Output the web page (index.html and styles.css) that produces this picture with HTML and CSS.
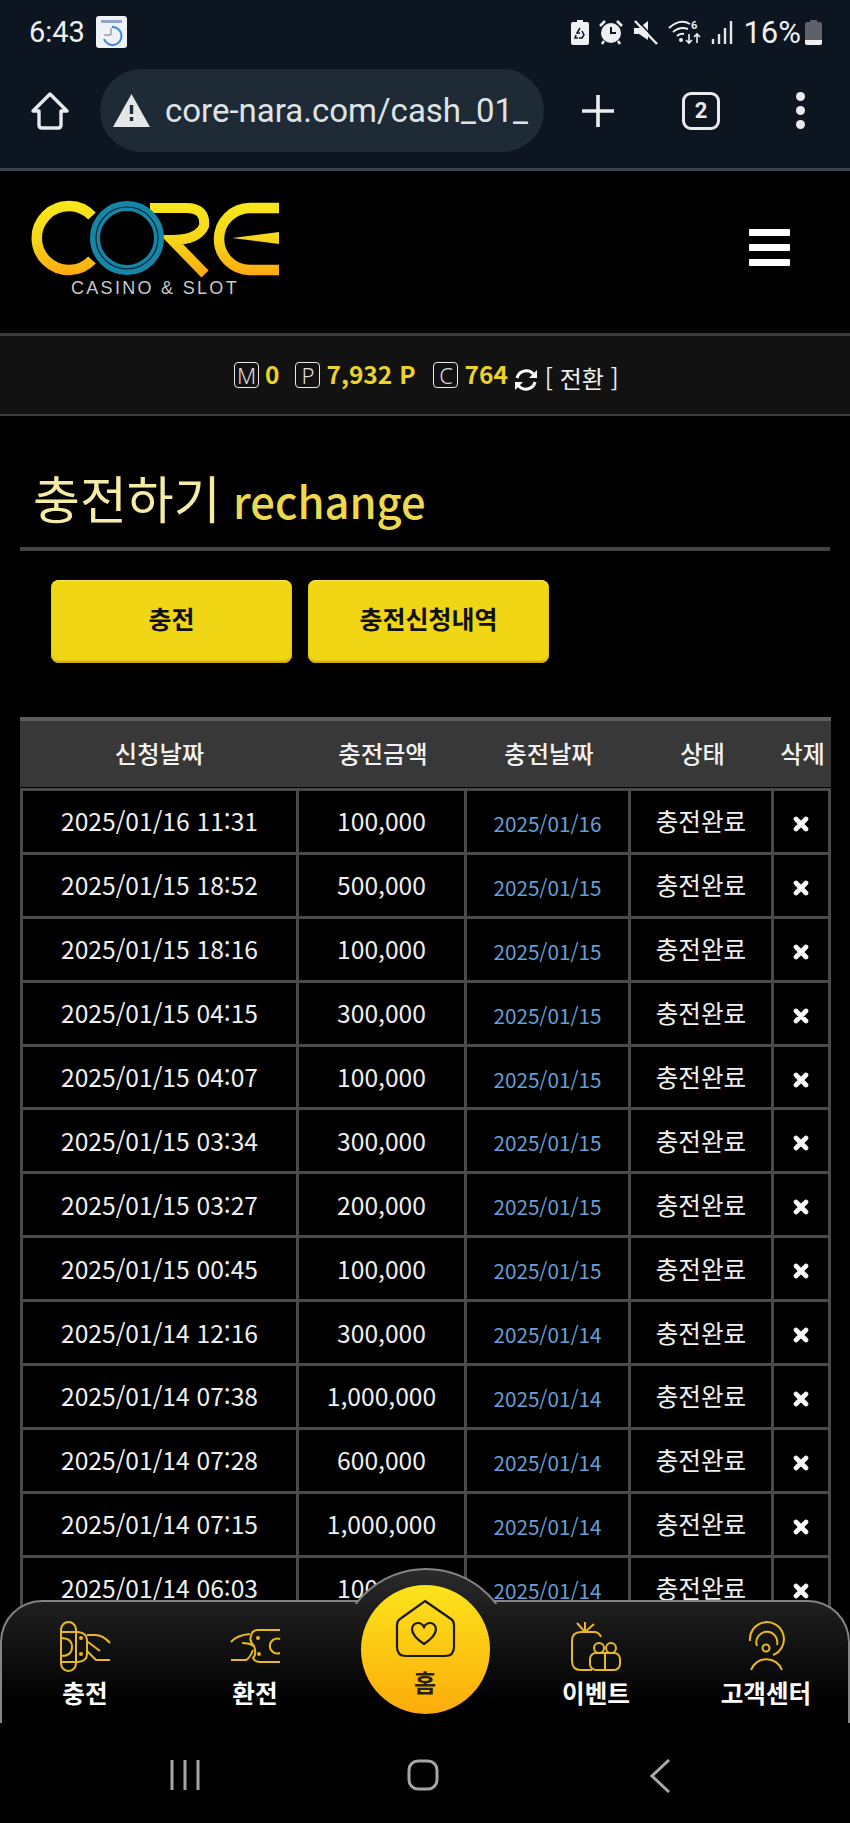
FILE: index.html
```html
<!DOCTYPE html>
<html lang="ko">
<head>
    <meta charset="UTF-8">
    <meta name="viewport" content="width=device-width, initial-scale=1.0">
    <title>충전하기</title>
    <link rel="stylesheet" href="styles.css">
</head>
<body>
    <div class="phone-top">
        <div class="status-bar">
            <span class="clock">6:43</span>
            <svg class="app-badge" width="31" height="32" viewBox="0 0 31 32">
                <rect width="31" height="32" rx="3" fill="#eef2f6"/>
                <rect x="5" y="4" width="21" height="3" fill="#8fa6c8"/>
                <path d="M16 11A9 9 0 1 1 8 23" fill="none" stroke="#3f86d8" stroke-width="2"/>
                <path d="M15 12V19H8" fill="none" stroke="#777" stroke-width="1"/>
            </svg>
            <div class="status-right">
                <svg width="18" height="25" viewBox="0 0 18 25">
                    <path d="M6 0H12V2H16Q18 2 18 4V23Q18 25 16 25H2Q0 25 0 23V4Q0 2 2 2H6Z" fill="#eef0f2"/>
                    <path d="M9 8L6 13H9M11 11L13 15L11 18H8M5 15L4 18H7" fill="none" stroke="#0c1620" stroke-width="1.5"/>
                </svg>
                <svg width="24" height="25" viewBox="0 0 24 25">
                    <circle cx="12" cy="13" r="10" fill="#eef0f2"/>
                    <path d="M12 7V13H17" fill="none" stroke="#0c1620" stroke-width="2"/>
                    <path d="M1 6L6 1M23 6L18 1M5 21L3 24M19 21L21 24" stroke="#eef0f2" stroke-width="2.5"/>
                </svg>
                <svg width="25" height="25" viewBox="0 0 25 25">
                    <path d="M1 8H6L15 1V20L6 14H1Z" fill="#eef0f2"/>
                    <path d="M2 1L24 24" stroke="#eef0f2" stroke-width="2.5"/>
                    <path d="M5 1L24 21" stroke="#0c1620" stroke-width="1.5"/>
                </svg>
                <svg width="33" height="26" viewBox="0 0 33 26">
                    <path d="M1 9Q12 -1 22 5M5 13Q12 7 20 10M9 17Q12 14 16 15" fill="none" stroke="#eef0f2" stroke-width="2"/>
                    <circle cx="13" cy="21" r="2" fill="#eef0f2"/>
                    <path d="M21 15V24M18 21L21 24L24 21M29 24V15M26 18L29 15L32 18" fill="none" stroke="#eef0f2" stroke-width="1.6"/>
                    <text class="wifi-six" x="23" y="10">6</text>
                </svg>
                <svg width="22" height="24" viewBox="0 0 22 24">
                    <path d="M2 19V24M8 14V24M14 8V24M20 1V24" stroke="#e4e6e8" stroke-width="2.4"/>
                </svg>
                <span class="battery-text">16%</span>
                <svg width="17" height="25" viewBox="0 0 17 25">
                    <path d="M5 0H12V2H15Q17 2 17 4V23Q17 25 15 25H2Q0 25 0 23V4Q0 2 2 2H5Z" fill="#5e6268"/>
                    <path d="M0 20H17V23Q17 25 15 25H2Q0 25 0 23Z" fill="#eef0f2"/>
                </svg>
            </div>
        </div>
        <div class="url-row">
            <svg class="home-ico" width="38" height="38" viewBox="0 0 38 38">
                <path d="M19 2L36 19H30V33Q30 36 27 36H11Q8 36 8 33V19H2Z" fill="none" stroke="#e8eaec" stroke-width="3.4" stroke-linejoin="round"/>
            </svg>
            <div class="url-pill">
                <svg width="37" height="33" viewBox="0 0 37 33">
                    <path d="M18.5 0L37 33H0Z" fill="#e4e6e8"/>
                    <path d="M18.5 11V20M18.5 23V27" stroke="#1e2b36" stroke-width="3.4"/>
                </svg>
                <span class="url-text">core-nara.com/cash_01_</span>
            </div>
            <svg class="plus-ico" width="34" height="34" viewBox="0 0 34 34">
                <path d="M17 1V33M1 17H33" stroke="#eceef0" stroke-width="3.6"/>
            </svg>
            <span class="tab-count">2</span>
            <div class="more-dots"><i></i><i></i><i></i></div>
        </div>
    </div>

    <header class="site-head">
        <div class="logo">
            <svg width="256" height="80" viewBox="28 198 256 80">
                <defs>
                    <linearGradient id="logoGold" gradientUnits="userSpaceOnUse" x1="0" y1="202" x2="0" y2="276">
                        <stop offset="0" stop-color="#f8e81c"/>
                        <stop offset="0.5" stop-color="#f6d61a"/>
                        <stop offset="1" stop-color="#fda80f"/>
                    </linearGradient>
                </defs>
                <g fill="none" stroke="url(#logoGold)" stroke-width="10.5">
                    <path d="M92 216A32 32 0 1 0 92 260"/>
                    <path d="M150 208H186Q206 208 204 226Q198 240 172 240L205 274" stroke-width="10"/>
                    <path d="M279 208H250A31 31 0 0 0 250 270H279"/>
                </g>
                <path d="M232 238L279 232V244Z" fill="url(#logoGold)"/>
                <circle cx="127" cy="238" r="32" fill="#000" stroke="#1585a8" stroke-width="10"/>
                <circle cx="127" cy="238" r="31" fill="none" stroke="#03222c" stroke-width="1.2"/>
            </svg>
            <span class="logo-sub">CASINO &amp; SLOT</span>
        </div>
        <div class="burger"><i></i><i></i><i></i></div>
    </header>

    <div class="money-bar">
        <span class="unit">M</span><b class="gold num-m">0</b>
        <span class="unit">P</span><b class="gold num-p">7,932 P</b>
        <span class="unit">C</span><b class="gold num-c">764</b>
        <svg class="refresh" width="24" height="24" viewBox="0 0 24 24">
            <path d="M3 10A9.5 9.5 0 0 1 20 7M21 14A9.5 9.5 0 0 1 4 17" fill="none" stroke="#fff" stroke-width="3"/>
            <path d="M23 2V10H15ZM1 22V14H9Z" fill="#fff"/>
        </svg>
        <span class="switch">[ 전환 ]</span>
    </div>

    <h1 class="page-title">충전하기 <span>rechange</span></h1>

    <div class="btn-row">
        <a class="gold-btn">충전</a>
        <a class="gold-btn">충전신청내역</a>
    </div>

    <table class="cash-table">
        <colgroup>
            <col class="c-req"><col class="c-amt"><col class="c-day"><col class="c-state"><col class="c-del">
        </colgroup>
        <thead>
            <tr><th>신청날짜</th><th>충전금액</th><th>충전날짜</th><th>상태</th><th>삭제</th></tr>
        </thead>
        <tbody>
            <tr><td>2025/01/16 11:31</td><td>100,000</td><td class="day">2025/01/16</td><td>충전완료</td><td class="del"><svg viewBox="0 0 16 16"><path d="M3 3L13 13M13 3L3 13"/></svg></td></tr>
            <tr><td>2025/01/15 18:52</td><td>500,000</td><td class="day">2025/01/15</td><td>충전완료</td><td class="del"><svg viewBox="0 0 16 16"><path d="M3 3L13 13M13 3L3 13"/></svg></td></tr>
            <tr><td>2025/01/15 18:16</td><td>100,000</td><td class="day">2025/01/15</td><td>충전완료</td><td class="del"><svg viewBox="0 0 16 16"><path d="M3 3L13 13M13 3L3 13"/></svg></td></tr>
            <tr><td>2025/01/15 04:15</td><td>300,000</td><td class="day">2025/01/15</td><td>충전완료</td><td class="del"><svg viewBox="0 0 16 16"><path d="M3 3L13 13M13 3L3 13"/></svg></td></tr>
            <tr><td>2025/01/15 04:07</td><td>100,000</td><td class="day">2025/01/15</td><td>충전완료</td><td class="del"><svg viewBox="0 0 16 16"><path d="M3 3L13 13M13 3L3 13"/></svg></td></tr>
            <tr><td>2025/01/15 03:34</td><td>300,000</td><td class="day">2025/01/15</td><td>충전완료</td><td class="del"><svg viewBox="0 0 16 16"><path d="M3 3L13 13M13 3L3 13"/></svg></td></tr>
            <tr><td>2025/01/15 03:27</td><td>200,000</td><td class="day">2025/01/15</td><td>충전완료</td><td class="del"><svg viewBox="0 0 16 16"><path d="M3 3L13 13M13 3L3 13"/></svg></td></tr>
            <tr><td>2025/01/15 00:45</td><td>100,000</td><td class="day">2025/01/15</td><td>충전완료</td><td class="del"><svg viewBox="0 0 16 16"><path d="M3 3L13 13M13 3L3 13"/></svg></td></tr>
            <tr><td>2025/01/14 12:16</td><td>300,000</td><td class="day">2025/01/14</td><td>충전완료</td><td class="del"><svg viewBox="0 0 16 16"><path d="M3 3L13 13M13 3L3 13"/></svg></td></tr>
            <tr><td>2025/01/14 07:38</td><td>1,000,000</td><td class="day">2025/01/14</td><td>충전완료</td><td class="del"><svg viewBox="0 0 16 16"><path d="M3 3L13 13M13 3L3 13"/></svg></td></tr>
            <tr><td>2025/01/14 07:28</td><td>600,000</td><td class="day">2025/01/14</td><td>충전완료</td><td class="del"><svg viewBox="0 0 16 16"><path d="M3 3L13 13M13 3L3 13"/></svg></td></tr>
            <tr><td>2025/01/14 07:15</td><td>1,000,000</td><td class="day">2025/01/14</td><td>충전완료</td><td class="del"><svg viewBox="0 0 16 16"><path d="M3 3L13 13M13 3L3 13"/></svg></td></tr>
            <tr><td>2025/01/14 06:03</td><td>100,000</td><td class="day">2025/01/14</td><td>충전완료</td><td class="del"><svg viewBox="0 0 16 16"><path d="M3 3L13 13M13 3L3 13"/></svg></td></tr>
        </tbody>
    </table>

    <nav class="bottom-nav">
        <div class="bump"><div class="bump-circle"></div></div>
        <a class="nav-item">
            <svg class="nav-ico" width="54" height="54" viewBox="8 10 54 54">
                <rect x="11" y="12" width="15" height="49" rx="7.5"/>
                <path d="M11 22H28Q37 23 37 30V44Q37 51 28 52H11M11 28Q22 28 22 37Q22 46 11 46"/>
                <path d="M37 25H45Q53 25 60 33M37 41L46 50H60M38 32L50 41"/>
                <circle class="dot" cx="31" cy="28" r="2"/><circle class="dot" cx="31" cy="44" r="2"/>
            </svg>
            <span>충전</span>
        </a>
        <a class="nav-item">
            <svg class="nav-ico" width="54" height="54" viewBox="178 10 54 54">
                <path d="M230 20H208Q202 20 201 26Q199 31 204 36Q207 44 203 48Q205 52 210 52H230"/>
                <path d="M181 32Q187 25 200 24M181 50H196Q200 48 203 40M192 33Q200 33 203 36"/>
                <path d="M230 29A7.5 7.5 0 1 0 230 43"/>
                <circle class="dot" cx="208" cy="28" r="2"/><circle class="dot" cx="209" cy="44" r="2"/>
            </svg>
            <span>환전</span>
        </a>
        <a class="nav-item nav-home">
            <svg width="64" height="62" viewBox="14 -2 64 62">
                <path d="M46 1L72 19Q75 21 75 25V47Q75 56 66 56H27Q18 56 18 47V25Q18 21 21 19Z" fill="none" stroke="#1c1a10" stroke-width="2.2"/>
                <path d="M45 44Q33 36 33 29Q34 23 39 23Q43 23 45 27Q47 23 51 23Q56 23 57 29Q57 36 45 44Z" fill="none" stroke="#1c1a10" stroke-width="2.2"/>
            </svg>
            <span>홈</span>
        </a>
        <a class="nav-item nav-right">
            <svg class="nav-ico" width="54" height="54" viewBox="10 10 54 54">
                <path d="M42 27Q40 22 35 22H22Q13 22 13 31V51Q13 60 22 60H33"/>
                <path d="M26 22L18 13M26 22V12M26 22L35 14"/>
                <rect x="31" y="43" width="30" height="17" rx="6"/>
                <circle cx="40" cy="38" r="5"/><circle cx="52" cy="38" r="5"/>
                <path d="M46 43V60"/>
            </svg>
            <span>이벤트</span>
        </a>
        <a class="nav-item nav-right">
            <svg class="nav-ico" width="54" height="54" viewBox="179 10 54 54">
                <path d="M190 31A17 17 0 1 1 213 45"/>
                <path d="M197 36A10.5 10.5 0 1 1 217 35"/>
                <circle cx="206" cy="38" r="3.5"/>
                <path d="M191 60A16.5 16.5 0 0 1 222 60"/>
            </svg>
            <span>고객센터</span>
        </a>
    </nav>

    <div class="android-nav">
        <svg width="32" height="32" viewBox="0 0 32 32"><path d="M3 1V31M16 1V31M29 1V31" stroke="#a6a6a6" stroke-width="3"/></svg>
        <svg width="32" height="32" viewBox="0 0 32 32"><rect x="2" y="2" width="28" height="28" rx="9" fill="none" stroke="#a6a6a6" stroke-width="3"/></svg>
        <svg width="22" height="34" viewBox="0 0 22 34"><path d="M19 1L2 17L19 33" fill="none" stroke="#a6a6a6" stroke-width="3"/></svg>
    </div>
</body>
</html>
```

FILE: styles.css
```css
* {
    box-sizing: border-box;
}
body {
    margin: 0;
    width: 850px;
    height: 1823px;
    overflow: hidden;
    position: relative;
    background: #000;
    color: #fff;
    font-family: "Noto Sans CJK KR", "Noto Sans", sans-serif;
}

/* phone chrome */
.phone-top {
    height: 171px;
    background: #0c1520;
    border-bottom: 3px solid #3d4350;
}
.status-bar {
    height: 64px;
    padding: 0 28px 0 29px;
    display: flex;
    align-items: center;
}
.clock {
    font: 400 29px Roboto, sans-serif;
    color: #eef0f2;
}
.app-badge {
    margin-left: 11px;
}
.status-right {
    margin-left: auto;
    display: flex;
    align-items: center;
    gap: 10px;
}
.wifi-six {
    font: 700 11px Roboto, sans-serif;
    fill: #eef0f2;
}
.battery-text {
    font: 400 31px Roboto, sans-serif;
    color: #eef0f2;
    margin-right: -6px;
}
.url-row {
    display: flex;
    align-items: center;
    height: 83px;
    margin-top: 5px;
    padding-left: 31px;
}
.url-pill {
    width: 444px;
    height: 83px;
    margin-left: 31px;
    padding-left: 13px;
    border-radius: 42px;
    background: #1e2b36;
    display: flex;
    align-items: center;
    gap: 15px;
    overflow: hidden;
}
.url-text {
    font: 400 33px Roboto, sans-serif;
    color: #dfe3e6;
    white-space: nowrap;
}
.plus-ico {
    margin-left: 37px;
}
.tab-count {
    width: 38px;
    height: 38px;
    margin-left: 67px;
    border: 3px solid #e8eaec;
    border-radius: 9px;
    font: 700 22px/32px Roboto, sans-serif;
    text-align: center;
    color: #e8eaec;
}
.more-dots {
    margin-left: 76px;
    display: flex;
    flex-direction: column;
    gap: 5px;
}
.more-dots i {
    width: 9px;
    height: 9px;
    border-radius: 50%;
    background: #e8eaec;
}

/* site header */
.site-head {
    height: 162px;
    display: flex;
    align-items: flex-start;
    justify-content: space-between;
    padding: 27px 60px 0 30px;
}
.logo {
    position: relative;
    width: 256px;
    margin-left: -2px;
}
.logo svg {
    display: block;
}
.logo-sub {
    display: block;
    margin-top: -1px;
    padding-left: 43px;
    font: 400 18px/22px "Liberation Sans", sans-serif;
    letter-spacing: 2.3px;
    color: #c9c9c9;
    white-space: nowrap;
}
.burger {
    margin-top: 31px;
    display: flex;
    flex-direction: column;
    gap: 8px;
}
.burger i {
    width: 41px;
    height: 7px;
    border-radius: 1px;
    background: #fff;
}

/* money bar */
.money-bar {
    height: 83px;
    background: #121212;
    border-top: 3px solid #3a3a3a;
    border-bottom: 2px solid #3a3a3a;
    display: flex;
    align-items: center;
    padding-left: 234px;
    font-size: 24px;
}
.unit {
    width: 25px;
    height: 26px;
    border: 1px solid #e8e8e8;
    border-radius: 4px;
    font: 300 22px/24px "Noto Sans", sans-serif;
    text-align: center;
    color: #ddd;
}
.gold {
    color: #ecd32a;
    font-weight: 700;
    font-size: 24.5px;
    line-height: 24px;
    margin-left: 6px;
    margin-top: -3px;
}
.num-m { margin-right: 16px; }
.num-p { margin-right: 18px; }
.num-c { margin-right: 6px; }
.refresh {
    margin-top: 9px;
}
.switch {
    margin: 5px 0 0 7px;
    font-size: 24px;
    color: #eee;
}

/* title */
.page-title {
    margin: 0 20px;
    height: 135px;
    padding: 45px 0 0 13px;
    border-bottom: 4px solid #444;
    font-weight: 400;
    font-size: 51px;
    line-height: 72px;
    word-spacing: -2px;
    color: #f6eca6;
    white-space: nowrap;
}
.page-title span {
    font-size: 43.5px;
    font-weight: 500;
    color: #ecd94e;
}

/* buttons */
.btn-row {
    display: flex;
    gap: 16px;
    padding: 29px 0 0 51px;
}
.gold-btn {
    width: 241px;
    height: 83px;
    border-radius: 8px;
    background: #f0d614;
    box-shadow: inset 0 -2px 2px #c9a90c, inset 0 1px 1px #f8e85a;
    color: #111;
    font-size: 25px;
    font-weight: 700;
    line-height: 76px;
    text-align: center;
}

/* table */
.cash-table {
    width: 811px;
    margin: 54px 0 0 20px;
    table-layout: fixed;
    border-collapse: separate;
    border-spacing: 0;
}
.c-req { width: 279px; }
.c-amt { width: 168px; }
.c-day { width: 164px; }
.c-state { width: 143px; }
.c-del { width: 57px; }
.cash-table th {
    height: 71px;
    padding: 0 0 5px;
    background: #383838;
    border-top: 4px solid #5c5c5c;
    box-shadow: inset 0 -1px 0 #000;
    font-size: 24.3px;
    font-weight: 500;
    color: #f2f2f2;
}
.cash-table td {
    height: 63.9px;
    padding: 0 0 2px;
    border-right: 3px solid #4a4a4a;
    border-bottom: 3px solid #4a4a4a;
    text-align: center;
    font-size: 24.6px;
    color: #f0f0f0;
}
.cash-table td:first-child {
    border-left: 3px solid #4a4a4a;
    font-feature-settings: "case";
}
.cash-table tbody tr:first-child td {
    border-top: 3px solid #4a4a4a;
    height: 66.9px;
}
.cash-table td.day {
    padding: 3px 0 0;
    font-size: 20.7px;
    color: #64a0d8;
}
.del svg {
    display: block;
    width: 16px;
    height: 16px;
    margin: 7px auto 0;
    fill: none;
    stroke: #fff;
    stroke-width: 4.6;
    stroke-linecap: round;
}

/* bottom nav */
.bottom-nav {
    position: absolute;
    left: 0;
    top: 1600px;
    width: 850px;
    height: 123px;
    display: grid;
    grid-template-columns: repeat(5, 170px);
    justify-content: center;
    border: 2px solid #858585;
    border-bottom: 0;
    border-radius: 42px 42px 0 0;
    background: linear-gradient(#1f1f1f, #000 85%);
}
.bump {
    position: absolute;
    left: 335px;
    top: -34px;
    width: 178px;
    height: 36px;
    overflow: hidden;
}
.bump-circle {
    width: 178px;
    height: 178px;
    border-radius: 50%;
    border: 2px solid #858585;
    background: linear-gradient(#2b2b2b, #1f1f1f 20%);
}
.nav-item {
    position: relative;
    display: flex;
    flex-direction: column;
    align-items: center;
    padding-top: 18px;
    font-size: 24.6px;
    font-weight: 700;
    line-height: 40px;
    color: #fff;
}
.nav-item span {
    margin-top: -2px;
}
.nav-right {
    padding-left: 2px;
}
.nav-ico {
    display: block;
    fill: none;
    stroke: #e8b923;
    stroke-width: 2;
}
.nav-ico .dot {
    fill: #e8b923;
    stroke: none;
}
.nav-home {
    align-self: start;
    justify-self: center;
    width: 129px;
    height: 129px;
    margin-top: -17px;
    padding-top: 13px;
    border-radius: 50%;
    background: linear-gradient(#fbe41c, #fdab0a);
    color: #2a2208;
    font-size: 24px;
    font-weight: 700;
    line-height: 32px;
}
.nav-home span {
    margin-top: 6px;
}

/* android buttons */
.android-nav {
    position: absolute;
    left: 0;
    top: 1723px;
    width: 850px;
    height: 100px;
    background: #000;
}
.android-nav svg {
    position: absolute;
    top: 36px;
}
.android-nav svg:nth-child(1) { left: 169px; }
.android-nav svg:nth-child(2) { left: 407px; }
.android-nav svg:nth-child(3) { left: 650px; }
```
